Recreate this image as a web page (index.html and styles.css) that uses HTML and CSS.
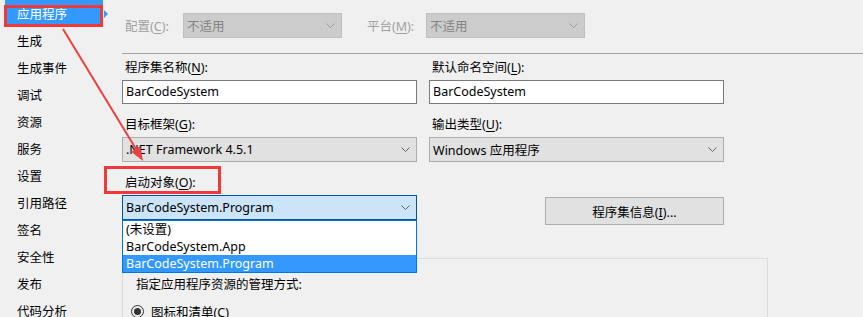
FILE: index.html
```html
<!DOCTYPE html>
<html lang="zh-CN">
<head>
  <meta charset="UTF-8" />
  <title>BarCodeSystem - 应用程序</title>
  <link rel="stylesheet" href="styles.css">
</head>
<body>

  <div class="window">
    <!-- Left page list -->
    <nav class="nav">
      <div class="nav-item active">应用程序</div>
      <div class="nav-item">生成</div>
      <div class="nav-item">生成事件</div>
      <div class="nav-item">调试</div>
      <div class="nav-item">资源</div>
      <div class="nav-item">服务</div>
      <div class="nav-item">设置</div>
      <div class="nav-item">引用路径</div>
      <div class="nav-item">签名</div>
      <div class="nav-item">安全性</div>
      <div class="nav-item">发布</div>
      <div class="nav-item">代码分析</div>
    </nav>

    <!-- Application page -->
    <main class="main">
      <div class="config-row">
        <span class="config-label disabled">配置(<u>C</u>):</span>
        <div class="combo combo-disabled config-combo">
          <span>不适用</span>
          <svg class="chevron" width="9" height="5" viewBox="0 0 9 5"><polyline points="0.5,0.5 4.5,4.5 8.5,0.5" /></svg>
        </div>
        <span class="config-label platform disabled">平台(<u>M</u>):</span>
        <div class="combo combo-disabled config-combo">
          <span>不适用</span>
          <svg class="chevron" width="9" height="5" viewBox="0 0 9 5"><polyline points="0.5,0.5 4.5,4.5 8.5,0.5" /></svg>
        </div>
      </div>

      <div class="divider"></div>

      <div class="form-grid">
        <div class="field">
          <label>程序集名称(<u>N</u>):</label>
          <div class="textbox">BarCodeSystem</div>
        </div>
        <div class="field">
          <label>默认命名空间(<u>L</u>):</label>
          <div class="textbox">BarCodeSystem</div>
        </div>

        <div class="field">
          <label>目标框架(<u>G</u>):</label>
          <div class="combo">
            <span>.NET Framework 4.5.1</span>
            <svg class="chevron" width="9" height="5" viewBox="0 0 9 5"><polyline points="0.5,0.5 4.5,4.5 8.5,0.5" /></svg>
          </div>
        </div>
        <div class="field">
          <label>输出类型(<u>U</u>):</label>
          <div class="combo">
            <span>Windows 应用程序</span>
            <svg class="chevron" width="9" height="5" viewBox="0 0 9 5"><polyline points="0.5,0.5 4.5,4.5 8.5,0.5" /></svg>
          </div>
        </div>

        <div class="field startup">
          <label>启动对象(<u>O</u>):</label>
          <div class="combo combo-open">
            <span>BarCodeSystem.Program</span>
            <svg class="chevron" width="9" height="5" viewBox="0 0 9 5"><polyline points="0.5,0.5 4.5,4.5 8.5,0.5" /></svg>
          </div>
          <div class="dropdown">
            <div class="option">(未设置)</div>
            <div class="option">BarCodeSystem.App</div>
            <div class="option selected">BarCodeSystem.Program</div>
          </div>
        </div>
        <div class="field button-field">
          <button class="info-btn">程序集信息(<u>I</u>)...</button>
        </div>
      </div>

      <div class="group">
        <p class="group-text">指定应用程序资源的管理方式:</p>
        <div class="radio-row">
          <span class="radio checked"></span>
          <span>图标和清单(C)</span>
        </div>
      </div>
    </main>
  </div>

  <!-- Annotations drawn over the screenshot -->
  <div class="mark mark-nav"></div>
  <div class="mark mark-startup"></div>
  <svg class="arrow" width="863" height="317" viewBox="0 0 863 317">
    <line x1="63" y1="29" x2="136" y2="149" />
    <polygon points="143,161 140.2,146.3 131.2,151.8" />
  </svg>

</body>
</html>
```

FILE: styles.css
```css
body {
  margin: 0;
  background: #f0f0f0;
  font-family: "Noto Sans", "Noto Sans CJK SC", sans-serif;
  font-size: 12.5px;
  color: #000;
  width: 863px;
  height: 317px;
  overflow: hidden;
  position: relative;
}
u {
  text-decoration-thickness: 1px;
  text-underline-offset: 2px;
}
.window {
  display: flex;
  height: 100%;
}

/* Page list */
.nav {
  width: 122px;
  flex-shrink: 0;
}
.nav-item {
  position: relative;
  width: 86px;
  height: 27px;
  line-height: 27px;
  margin-left: 5px;
  padding-left: 12px;
  font-family: "Noto Sans CJK SC", sans-serif;
}
.nav-item.active {
  background: #3399ff;
  color: white;
}
.nav-item.active::after {
  content: "";
  position: absolute;
  left: 99px;
  top: 10px;
  border-left: 4px solid #3399ff;
  border-top: 4px solid transparent;
  border-bottom: 4px solid transparent;
}

/* Main page */
.main {
  flex: 1;
  min-height: 0;
  overflow: hidden;
}
.config-row {
  display: flex;
  align-items: center;
  padding-top: 13px;
  height: 24px;
}
.config-label {
  width: 61px;
  padding-left: 3px;
  box-sizing: border-box;
}
.config-label.platform {
  width: 62px;
  margin-left: 22px;
}
.disabled {
  color: #a0a0a0;
}
.divider {
  margin-top: 16px;
  height: 1px;
  background: #a0a0a0;
}
.form-grid {
  display: grid;
  grid-template-columns: 295px 295px;
  column-gap: 12px;
  row-gap: 13px;
  margin-top: 6px;
}
.field label {
  display: block;
  height: 16px;
  line-height: 16px;
  padding-left: 3px;
  margin-bottom: 4px;
}
.textbox {
  height: 22px;
  line-height: 22px;
  background: white;
  border: 1px solid #7a7a7a;
  padding-left: 3px;
}
.combo {
  display: flex;
  align-items: center;
  justify-content: space-between;
  height: 23px;
  background: #e1e1e1;
  border: 1px solid #adadad;
  padding: 0 6px 0 3px;
}
.combo-disabled {
  background: #cccccc;
  border-color: #bfbfbf;
  color: #838383;
}
.config-combo {
  width: 148px;
}
.combo-open {
  background: #cce4f7;
  border-color: #005499;
}
.chevron {
  fill: none;
  stroke: #606060;
  stroke-width: 1;
}
.combo-disabled .chevron {
  stroke: #9a9a9a;
}
.startup {
  position: relative;
}
.dropdown {
  position: absolute;
  left: 0;
  top: 45px;
  width: 293px;
  background: white;
  border: 1px solid #0078d7;
  z-index: 5;
}
.option {
  height: 17px;
  line-height: 17px;
  padding-left: 3px;
}
.option.selected {
  background: #3399ff;
  color: white;
}
.button-field {
  display: flex;
  justify-content: flex-end;
  padding-top: 22px;
}
.info-btn {
  width: 179px;
  height: 28px;
  background: #e1e1e1;
  border: 1px solid #adadad;
  font: inherit;
  color: #000;
  padding: 0;
}
.group {
  margin-top: 33px;
  width: 646px;
  height: 64px;
  box-sizing: border-box;
  border: 1px solid #dcdcdc;
  border-bottom: none;
  padding: 0 13px;
}
.group-text {
  margin: 18px 0 0;
  line-height: 16px;
}
.radio-row {
  display: flex;
  align-items: center;
  gap: 7px;
  margin: 9px 0 0 -5px;
}
.radio {
  width: 11px;
  height: 11px;
  border: 1px solid #333;
  border-radius: 50%;
  position: relative;
}
.radio.checked::after {
  content: "";
  position: absolute;
  left: 2px;
  top: 2px;
  width: 7px;
  height: 7px;
  border-radius: 50%;
  background: #333;
}

/* Red annotation marks */
.mark {
  position: absolute;
  border: 3px solid #f03a3a;
  box-sizing: border-box;
  z-index: 10;
}
.mark-nav {
  left: 4px;
  top: 5px;
  width: 99px;
  height: 22px;
}
.mark-startup {
  left: 104px;
  top: 166px;
  width: 117px;
  height: 28px;
}
.arrow {
  position: absolute;
  left: 0;
  top: 0;
  z-index: 10;
  pointer-events: none;
}
.arrow line {
  stroke: #ec3f3f;
  stroke-width: 2;
}
.arrow polygon {
  fill: #ec3f3f;
}
```
